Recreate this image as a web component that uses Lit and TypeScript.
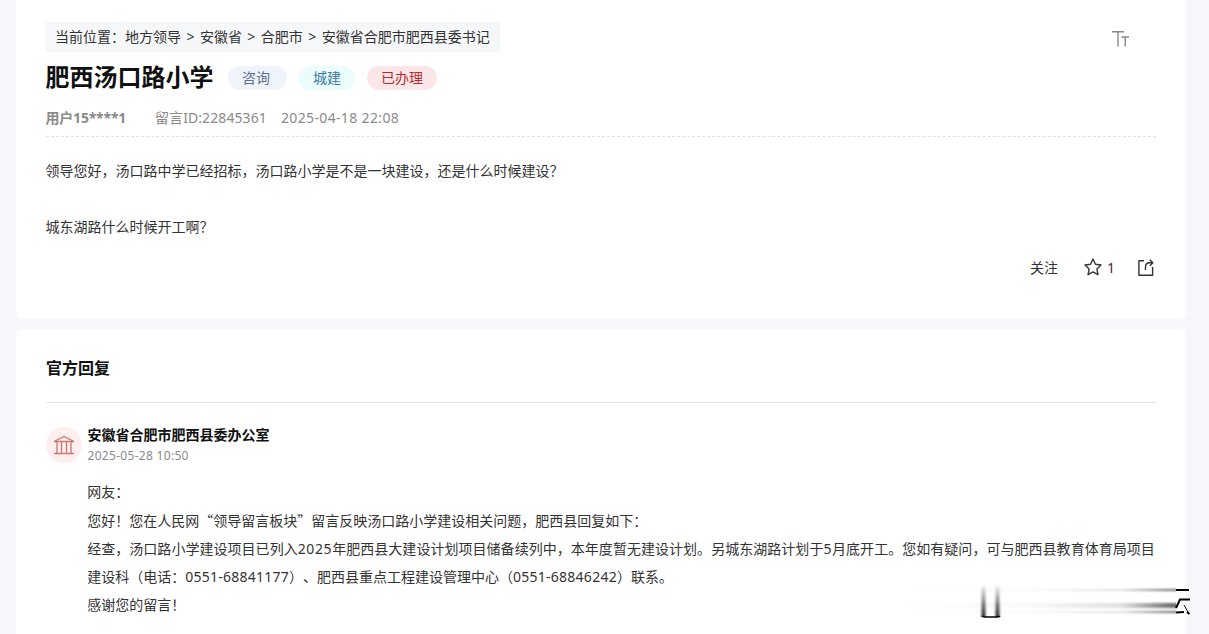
import { LitElement, html, css, svg } from 'lit';
import { customElement, property } from 'lit/decorators.js';

const icons = {
  fontSize: svg`<path d="M0 1.700h12M6 1.700v14.800M9.500 7h7.500M13.200 7v9.500" />`,
  star: svg`<path d="M9 1l2.450 5.250 5.550.720-4.100 3.950 1.050 5.780L9 13.850 4.050 16.700l1.050-5.780L1 6.970l5.550-.720z" />`,
  share: svg`<path d="M7 1.700H1.900V16.200H15.600V8M8.500 11V8q0-4.200 4.200-4.200h3M12.800.800l3 3-3 3" />`,
};

@customElement('line-icon')
export class LineIcon extends LitElement {
  @property() name: keyof typeof icons = 'star';

  static styles = css`
    :host {
      display: block;
      width: 18px;
      height: 18px;
    }

    svg {
      display: block;
      fill: none;
      stroke: currentColor;
      stroke-width: 1.4;
      stroke-linejoin: round;
    }
  `;

  render() {
    return html`<svg width="18" height="18" viewBox="0 0 18 18">${icons[this.name]}</svg>`;
  }
}

@customElement('app-root')
export class AppRoot extends LitElement {
  crumbs = ['地方领导', '安徽省', '合肥市', '安徽省合肥市肥西县委书记'];

  tags = [
    { label: '咨询', type: 'ask' },
    { label: '城建', type: 'city' },
    { label: '已办理', type: 'done' },
  ];

  static styles = css`
    :host {
      display: block;
      position: relative;
      box-sizing: border-box;
      height: 634px;
      padding: 0 23px 0 16px;
      overflow: hidden;
      background: #f6f7fa;
      color: #333;
      font: 14px/28px 'Noto Sans', 'Noto Sans CJK SC', sans-serif;
      white-space: nowrap;
      text-spacing-trim: space-all;
    }

    .card {
      box-sizing: border-box;
      padding: 0 30px;
      background: #fff;
      border-radius: 8px;
    }

    .message {
      height: 319px;
      padding-top: 22px;
      border-radius: 0 0 8px 8px;
    }

    .reply {
      height: 320px;
      margin-top: 10px;
      padding-top: 24px;
    }

    .top {
      display: flex;
      justify-content: space-between;
      align-items: flex-start;
    }

    .top line-icon {
      margin: 8px 26px 0 0;
      color: #888;
    }

    .crumbs {
      display: flex;
      height: 30px;
      padding: 0 10px 0 9px;
      background: #f6f7f9;
      line-height: 30px;
    }

    .sep {
      width: 18.900px;
      text-align: center;
    }

    .heading {
      display: flex;
      align-items: center;
      height: 52px;
    }

    h1 {
      margin: -2px 14.500px 0 -0.500px;
      color: #111;
      font-size: 24px;
      line-height: 36px;
    }

    .tag {
      height: 24px;
      margin-right: 12px;
      padding: 0 14px;
      border-radius: 12px;
      line-height: 24px;
    }

    .ask {
      padding-right: 17px;
      background: #eff3fa;
      color: #60718f;
    }

    .city {
      background: #ebfcfc;
      color: #3a78a5;
    }

    .done {
      background: #fbe7e8;
      color: #b8292f;
    }

    .meta {
      display: flex;
      height: 32px;
      border-bottom: 1px dashed #e2e2e2;
      color: #8a8a8a;
      line-height: 28px;
    }

    .meta b {
      width: 109.500px;
      margin-left: -0.500px;
      letter-spacing: -0.200px;
    }

    .meta .id {
      width: 126px;
      letter-spacing: 0.080px;
    }

    .meta .date {
      letter-spacing: 0.350px;
    }

    .question {
      margin-left: -0.500px;
      padding-top: 20px;
    }

    .question p {
      margin: 0 0 28px;
    }

    .actions {
      display: flex;
      justify-content: flex-end;
      align-items: center;
      margin-top: -15px;
    }

    .actions .star {
      margin: -2px 5px 0 26px;
    }

    .actions .share {
      margin: -1px 1px 0 22px;
    }

    h2 {
      height: 49px;
      margin: 0;
      border-bottom: 1px solid #e5e5e5;
      color: #111;
      font-size: 16px;
      line-height: 30px;
    }

    .author {
      display: flex;
      gap: 5.500px;
      padding-top: 22px;
    }

    .avatar {
      display: grid;
      place-items: center;
      width: 36px;
      height: 36px;
      margin-top: 2px;
      border-radius: 50%;
      background: #feefef;
    }

    .avatar svg {
      margin-top: -1px;
      fill: none;
      stroke: #c97873;
      stroke-width: 1.3;
    }

    .name {
      color: #111;
      font-weight: bold;
      line-height: 20px;
    }

    .time {
      padding-top: 1px;
      color: #8a8a8a;
      font-size: 12px;
      line-height: 20px;
      letter-spacing: 0.300px;
    }

    .answer {
      padding: 12px 0 0 41.200px;
    }

    .answer p {
      margin: 0;
    }

    .quote {
      font-family: 'Noto Sans CJK SC', sans-serif;
    }

    .num {
      letter-spacing: 0.600px;
    }

    .long {
      letter-spacing: 0.036px;
    }

    .phone {
      letter-spacing: 0.250px;
    }

    .streaks {
      position: absolute;
      left: 900px;
      top: 580px;
    }
  `;

  render() {
    return html`
      <section class="card message">
        <div class="top">
          <nav class="crumbs">
            <span>当前位置：</span>
            ${this.crumbs.map(
              (crumb, i) => html`${i ? html`<span class="sep">&gt;</span>` : ''}<span>${crumb}</span>`
            )}
          </nav>
          <line-icon name="fontSize"></line-icon>
        </div>
        <div class="heading">
          <h1>肥西汤口路小学</h1>
          ${this.tags.map((tag) => html`<span class="tag ${tag.type}">${tag.label}</span>`)}
        </div>
        <div class="meta">
          <b>用户15****1</b>
          <span class="id">留言ID:22845361</span>
          <span class="date">2025-04-18 22:08</span>
        </div>
        <div class="question">
          <p>领导您好，汤口路中学已经招标，汤口路小学是不是一块建设，还是什么时候建设？</p>
          <p>城东湖路什么时候开工啊？</p>
        </div>
        <div class="actions">
          <span>关注</span>
          <line-icon class="star" name="star"></line-icon>
          <span>1</span>
          <line-icon class="share" name="share"></line-icon>
        </div>
      </section>

      <section class="card reply">
        <h2>官方回复</h2>
        <div class="author">
          <div class="avatar">
            <svg width="22" height="20" viewBox="0 0 22 20">
              <path d="M1 6.500 11 1.500l10 5zM1 18.500h20M4 7v11M8.500 7v11M13.500 7v11M18 7v11" />
            </svg>
          </div>
          <div>
            <div class="name">安徽省合肥市肥西县委办公室</div>
            <div class="time">2025-05-28 10:50</div>
          </div>
        </div>
        <div class="answer">
          <p>网友：</p>
          <p>您好！您在人民网<span class="quote">“</span>领导留言板块<span class="quote">”</span>留言反映汤口路小学建设相关问题，肥西县回复如下：</p>
          <p class="long">经查，汤口路小学建设项目已列入<span class="num">2025</span>年肥西县大建设计划项目储备续列中，本年度暂无建设计划。另城东湖路计划于<span class="num">5</span>月底开工。您如有疑问，可与肥西县教育体育局项目</p>
          <p>建设科（电话：<span class="phone">0551-68841177</span>）、肥西县重点工程建设管理中心（<span class="phone">0551-68846242</span>）联系。</p>
          <p>感谢您的留言！</p>
        </div>
      </section>

      <svg class="streaks" width="292" height="44" viewBox="0 0 292 44">
        <defs>
          <linearGradient id="trail">
            <stop offset="0" stop-opacity="0" />
            <stop offset="0.5" stop-opacity="0.03" />
            <stop offset="0.8" stop-opacity="0.12" />
            <stop offset="1" stop-opacity="0.6" />
          </linearGradient>
          <linearGradient id="drop" x2="0" y2="1">
            <stop offset="0" stop-opacity="0" />
            <stop offset="1" stop-opacity="0.85" />
          </linearGradient>
          <filter id="soft" x="-20%" y="-100%" width="120%" height="300%">
            <feGaussianBlur stdDeviation="0 1" />
          </filter>
          <filter id="side" x="-100%" width="300%">
            <feGaussianBlur stdDeviation="0.9 0" />
          </filter>
        </defs>
        <g fill="url(#trail)" filter="url(#soft)">
          <rect y="9" width="276" height="2" />
          <rect y="23" width="276" height="5" />
          <rect y="31" width="276" height="2" />
        </g>
        <g fill="url(#drop)" filter="url(#side)">
          <rect x="81.500" y="4" width="4" height="33" />
          <rect x="95.500" y="4" width="4" height="33" />
        </g>
        <g fill="none" stroke="#000">
          <path d="M82 36q1 1 3 1h12q2 0 3-1" stroke-width="1.5" />
          <path d="M276 10h13M276 28l4-8.500h10M276 32.500l8-.500" stroke-width="2" />
          <path d="M284 25l4 7" />
          <path d="M287 32l2.500 2" stroke-width="2" />
        </g>
      </svg>
    `;
  }
}
